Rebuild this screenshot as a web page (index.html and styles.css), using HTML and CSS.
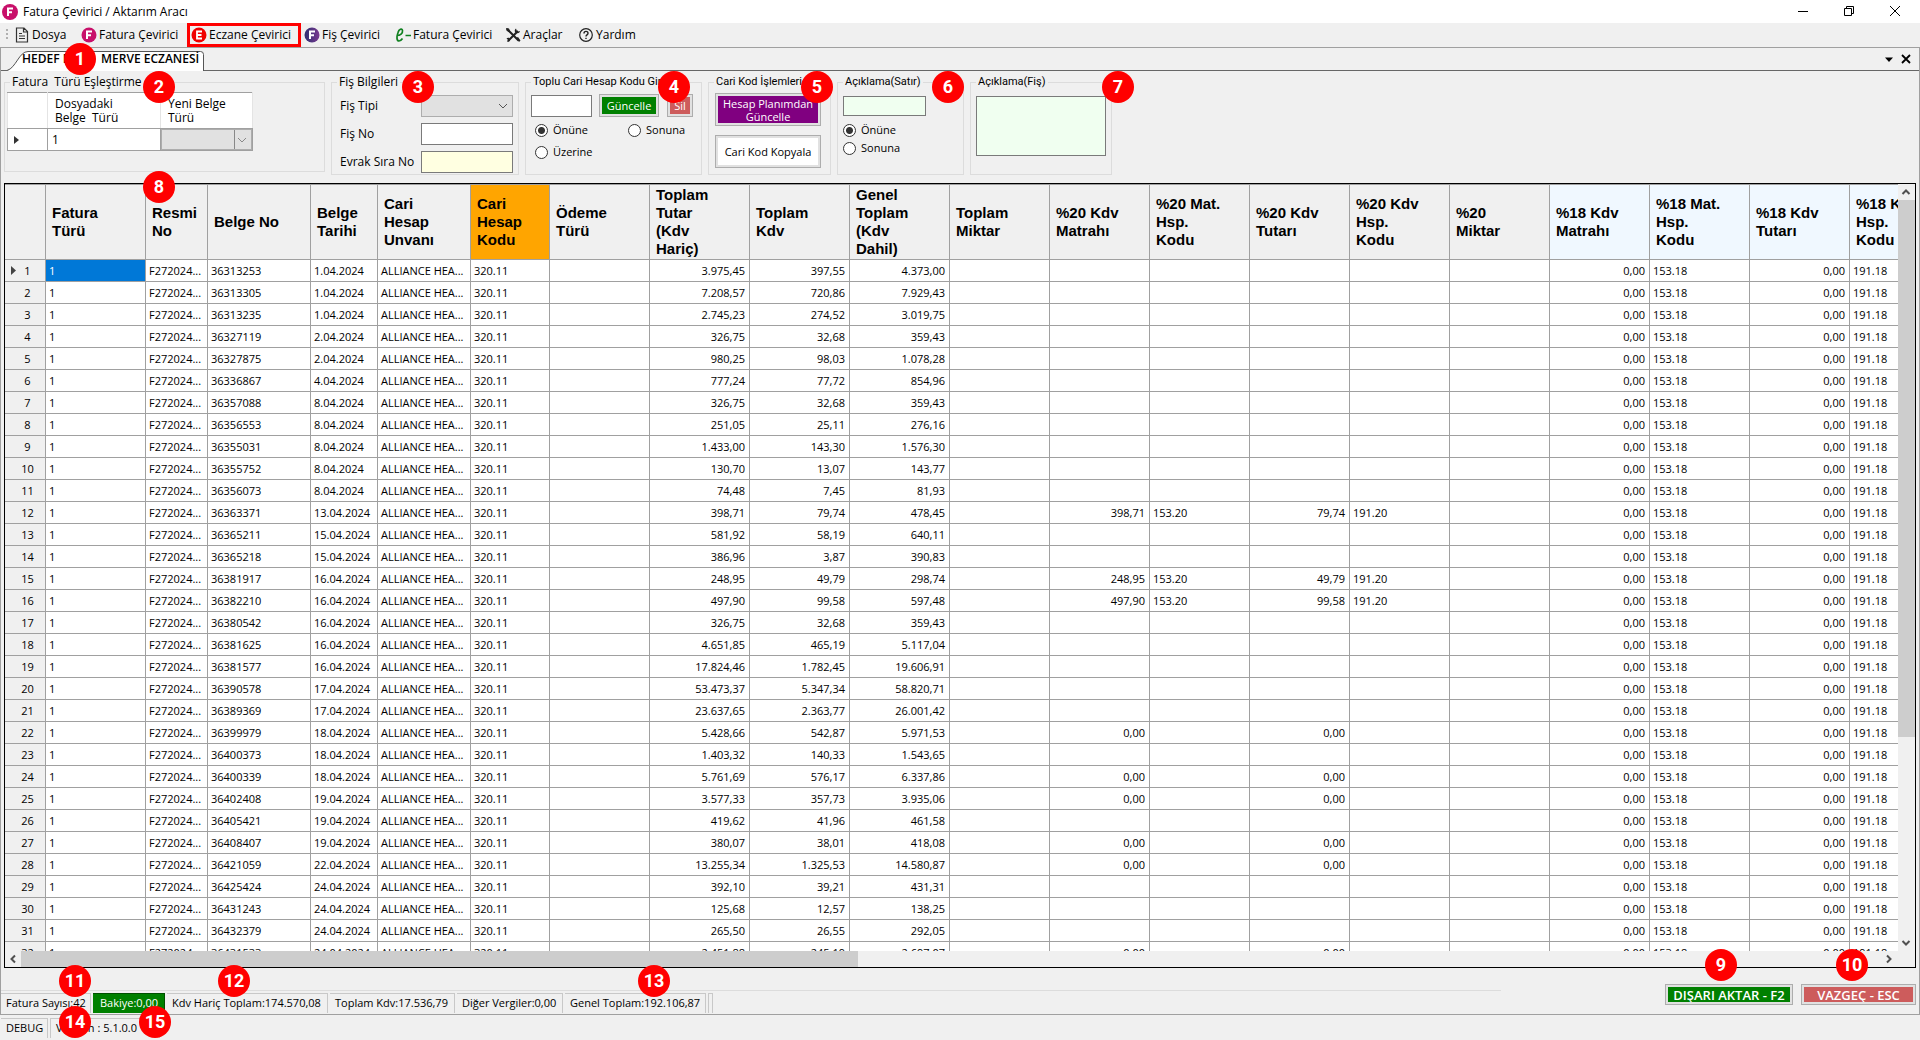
FILE: index.html
```
<!DOCTYPE html>
<html lang="tr">
<head>
<meta charset="utf-8">
<title>Fatura Çevirici / Aktarım Aracı</title>
<link rel="stylesheet" href="styles.css">
</head>
<body>
<header class="titlebar">
  <svg class="disc" viewBox="0 0 16 16"><circle cx="8" cy="8" r="8" fill="#c8106a"/><path d="M6 12V4.500h5M6 8.200h4" fill="none" stroke="#fff" stroke-width="2"/></svg>
  <h1>Fatura Çevirici / Aktarım Aracı</h1>
  <div class="winbtns">
    <button aria-label="Simge durumuna küçült"><svg viewBox="0 0 12 12"><path d="M1 6.500h10" stroke="#000" fill="none"/></svg></button>
    <button aria-label="Önceki boyut"><svg viewBox="0 0 12 12"><path d="M1.500 3.500h7v7h-7zM3.500 3.500v-2h7v7h-2" stroke="#000" fill="none"/></svg></button>
    <button aria-label="Kapat"><svg viewBox="0 0 12 12"><path d="M1 1l10 10M11 1L1 11" stroke="#000" fill="none"/></svg></button>
  </div>
</header>

<nav class="menu">
  <svg class="grip" viewBox="0 0 4 14"><path d="M1 1h2v2H1zM1 5h2v2H1zM1 9h2v2H1z" fill="#b0b0b0"/></svg>
  <button class="m-file"><svg viewBox="0 0 16 16"><path d="M2.500 1h7.500l3.500 3.500V15h-11zM9.500 1v4h4M5 6.500h3M5 9h6M5 11.500h6" fill="none" stroke="#333" stroke-width="1.200"/></svg>Dosya</button>
  <button class="m-inv"><svg viewBox="0 0 16 16"><circle cx="8" cy="8" r="7.500" fill="#c8106a"/><path d="M6 12V4.500h5M6 8.200h4" fill="none" stroke="#fff" stroke-width="2"/></svg>Fatura Çevirici</button>
  <button class="m-pharm marked"><svg viewBox="0 0 16 16"><circle cx="8" cy="8" r="7.500" fill="#f00000"/><path d="M11 4.500H6v7h5M6 8h4.500" fill="none" stroke="#fff" stroke-width="1.800"/></svg>Eczane Çevirici</button>
  <button class="m-slip"><svg viewBox="0 0 16 16"><defs><linearGradient id="slip"><stop offset="0" stop-color="#2e3070"/><stop offset="1" stop-color="#7a3a90"/></linearGradient></defs><circle cx="8" cy="8" r="7.500" fill="url(#slip)"/><path d="M6 12V4.500h5M6 8.200h4" fill="none" stroke="#fff" stroke-width="2"/></svg>Fiş Çevirici</button>
  <button class="m-einv"><svg viewBox="0 0 16 16"><path d="M2 8.500c3 0 6-2 5.500-5C7 1 4 2 3 5.500 1.500 10 1.500 14 4 14c1.500 0 2.500-1 3.500-2.500M10.500 8.500H16" fill="none" stroke="#108020" stroke-width="1.700"/></svg>Fatura Çevirici</button>
  <button class="m-tools"><svg viewBox="0 0 16 16"><path d="M2 2l11.500 11.500M13 4L3 14" fill="none" stroke="#222" stroke-width="2"/><path d="M11 1.500c-2 1.500-1.500 4 .5 4.500s3.500-.5 3.500-2l-2 .8-1.300-1.200zM1.500 11.500c1-1.500 3.500-1 3.500 1s-1.500 2.500-3 2l1.200-1.500zM1 1l3 .5L5 4 3.500 5 1.500 3.500zM11 11l2-1 2.500 3.500-1.500 1.500z" fill="#222"/></svg>Araçlar</button>
  <button class="m-help"><svg viewBox="0 0 16 16"><circle cx="8" cy="8" r="6.300" fill="none" stroke="#222" stroke-width="1.200"/><path d="M6 6.500C6 3.700 10 3.700 10 6.300 10 8 8 7.800 8 9.500M8 10.700v1.400" fill="none" stroke="#222" stroke-width="1.400"/></svg>Yardım</button>
</nav>

<main class="frame">
  <div class="tabs">
    <button class="tab"><svg viewBox="0 0 197 20"><path d="M0 19.500C9 19 12 0.500 21 0.500H193.500Q196.500 0.500 196.500 3.500V20H0z" fill="#fff"/><path d="M0 19.500C9 17 12 0.500 21 0.500H193.500Q196.500 0.500 196.500 3.500V20" fill="none" stroke="#555"/></svg><span class="tab-a">HEDEF DEPO</span><span>MERVE ECZANESİ</span></button>
    <div class="tabtools">
      <button aria-label="Sekmeler"><svg viewBox="0 0 10 10"><path d="M1 3.500h8L5 8z"/></svg></button>
      <button aria-label="Sekmeyi kapat"><svg viewBox="0 0 10 10"><path d="M1 1l8 8M9 1L1 9" stroke="#000" stroke-width="1.800"/></svg></button>
    </div>
  </div>

  <section class="groups">
    <fieldset class="g-match"><legend>Fatura &nbsp;Türü Eşleştirme</legend>
      <table class="match">
        <colgroup><col class="w-mark"><col class="w-doc"><col class="w-new"></colgroup>
        <thead><tr><th></th><th>Dosyadaki<br>Belge &nbsp;Türü</th><th>Yeni Belge<br>Türü</th></tr></thead>
        <tbody><tr><td><svg class="rowmark" viewBox="0 0 5 8"><path d="M0 0l5 4-5 4z" fill="#333"/></svg></td><td>1</td><td><select class="split" aria-label="Yeni Belge Türü"><option></option></select></td></tr></tbody>
      </table>
    </fieldset>
    <fieldset class="g-slip"><legend>Fiş Bilgileri</legend>
      <div class="form">
        <label for="tip">Fiş Tipi</label><select id="tip"><option></option></select>
        <label for="no">Fiş No</label><input id="no" type="text">
        <label for="evrak">Evrak Sıra No</label><input id="evrak" class="yellow" type="text">
      </div>
    </fieldset>
    <fieldset class="g-code"><legend>Toplu Cari Hesap Kodu Giriş</legend>
      <div class="coderow">
        <input type="text" aria-label="Cari hesap kodu">
        <button class="btn green">Güncelle</button>
        <button class="btn coral">Sil</button>
      </div>
      <div class="radios">
        <label><input type="radio" name="kod" checked>Önüne</label>
        <label><input type="radio" name="kod">Sonuna</label>
        <label><input type="radio" name="kod">Üzerine</label>
      </div>
    </fieldset>
    <fieldset class="g-ops"><legend>Cari Kod İşlemleri</legend>
      <div class="stack">
        <button class="btn purple">Hesap Planımdan<br>Güncelle</button>
        <button class="btn white">Cari Kod Kopyala</button>
      </div>
    </fieldset>
    <fieldset class="g-line"><legend>Açıklama(Satır)</legend>
      <input class="mint" type="text" aria-label="Açıklama satır">
      <div class="radios one">
        <label><input type="radio" name="satir" checked>Önüne</label>
        <label><input type="radio" name="satir">Sonuna</label>
      </div>
    </fieldset>
    <fieldset class="g-note"><legend>Açıklama(Fiş)</legend>
      <textarea class="mint" aria-label="Açıklama fiş"></textarea>
    </fieldset>
  </section>

  <section class="grid">
    <div class="gridview">
      <table class="data">
        <colgroup><col class="c-num"><col><col class="c-res"><col class="c-bel"><col class="c-date"><col class="c-name"><col class="c-code"><col><col><col><col><col><col><col><col><col><col><col><col><col><col></colgroup>
        <thead><tr>
          <th></th><th>Fatura<br>Türü</th><th>Resmi<br>No</th><th>Belge No</th><th>Belge<br>Tarihi</th><th>Cari<br>Hesap<br>Unvanı</th><th class="orange">Cari<br>Hesap<br>Kodu</th><th>Ödeme<br>Türü</th><th>Toplam<br>Tutar<br>(Kdv<br>Hariç)</th><th>Toplam<br>Kdv</th><th>Genel<br>Toplam<br>(Kdv<br>Dahil)</th><th>Toplam<br>Miktar</th><th>%20 Kdv<br>Matrahı</th><th>%20 Mat.<br>Hsp.<br>Kodu</th><th>%20 Kdv<br>Tutarı</th><th>%20 Kdv<br>Hsp.<br>Kodu</th><th>%20<br>Miktar</th><th class="blue">%18 Kdv<br>Matrahı</th><th class="blue">%18 Mat.<br>Hsp.<br>Kodu</th><th class="blue">%18 Kdv<br>Tutarı</th><th class="blue">%18 Kdv<br>Hsp.<br>Kodu</th>
        </tr></thead>
        <tbody id="rows"></tbody>
      </table>
    </div>
    <div class="vbar">
      <svg viewBox="0 0 16 16"><path d="M4.500 10L8 6.500 11.500 10" fill="none" stroke="#505050" stroke-width="2"/></svg>
      <div class="track"><div class="thumb"></div></div>
      <svg viewBox="0 0 16 16"><path d="M4.500 6L8 9.500 11.500 6" fill="none" stroke="#505050" stroke-width="2"/></svg>
    </div>
    <div class="hbar">
      <svg viewBox="0 0 16 16"><path d="M10 4.500L6.500 8 10 11.500" fill="none" stroke="#505050" stroke-width="2"/></svg>
      <div class="track"><div class="thumb"></div></div>
      <svg viewBox="0 0 16 16"><path d="M6 4.500L9.500 8 6 11.500" fill="none" stroke="#505050" stroke-width="2"/></svg>
    </div>
  </section>

  <footer class="foot">
    <div class="totals">
      <span class="s1">Fatura Sayısı:42</span><span class="s2 bal">Bakiye:0,00</span><span class="s3">Kdv Hariç Toplam:174.570,08</span><span class="s4">Toplam Kdv:17.536,79</span><span class="s5">Diğer Vergiler:0,00</span><span class="s6">Genel Toplam:192.106,87</span><span class="s7"></span>
    </div>
    <div class="actions">
      <button class="btn green big export">DIŞARI AKTAR - F2</button>
      <button class="btn coral big cancel">VAZGEÇ - ESC</button>
    </div>
  </footer>
</main>

<div class="status"><span class="t1">DEBUG</span><span class="t2">Version : 5.1.0.0</span></div>

<div class="badge b1">1</div><div class="badge b2">2</div><div class="badge b3">3</div><div class="badge b4">4</div><div class="badge b5">5</div><div class="badge b6">6</div><div class="badge b7">7</div><div class="badge b8">8</div><div class="badge b9">9</div><div class="badge b10">10</div><div class="badge b11">11</div><div class="badge b12">12</div><div class="badge b13">13</div><div class="badge b14">14</div><div class="badge b15">15</div>
<script src="rows.js"></script>
</body>
</html>
```
FILE: styles.css
```
* { box-sizing: border-box; }
body { margin: 0; position: relative; height: 100vh; min-height: 600px; overflow: hidden; display: flex; flex-direction: column; background: #f0f0f0; color: #000; font: 11px/14px "Open Sans", "Noto Sans", sans-serif; }
button { font: inherit; color: inherit; border: 0; background: none; padding: 0; }
button, span, label, legend { white-space: nowrap; }
input, select, textarea { font: inherit; margin: 0; border: 1px solid #7a7a7a; border-radius: 0; background: #fff; padding: 0 3px; }

.titlebar { height: 23px; flex: none; background: #fff; display: flex; align-items: center; padding-left: 2px; }
.titlebar .disc { width: 16px; height: 16px; }
.titlebar h1 { margin: 0 auto 0 5px; font-size: 12px; font-weight: 400; }
.winbtns { display: flex; padding-right: 2px; }
.winbtns button { width: 46px; height: 23px; display: grid; place-items: center; }
.winbtns svg { width: 12px; height: 12px; margin-bottom: 2px; }

.menu { height: 24px; flex: none; display: flex; align-items: center; padding-left: 5px; font-size: 12px; }
.menu .grip { width: 4px; height: 14px; margin-right: 5px; }
.menu button { display: flex; align-items: center; gap: 2px; height: 24px; text-align: left; }
.menu button svg { width: 16px; height: 16px; flex: none; }
.m-file { width: 67px; }
.m-inv { width: 106px; }
.m-pharm { width: 114px; }
.m-slip { width: 91px; margin-left: 3px; }
.m-einv { width: 110px; }
.m-tools { width: 73px; }
.menu .marked { border: 3px solid #f00; padding-left: 1px; }

.frame { flex: 1; min-height: 0; display: flex; flex-direction: column; border: 1px solid #a0a0a0; }
.tabs { height: 23px; flex: none; display: flex; justify-content: space-between; align-items: flex-end; border-bottom: 1px solid #666; padding: 0 8px 0 6px; }
.tab { position: relative; width: 197px; height: 20px; margin-bottom: -1px; padding-left: 15px; display: flex; font-size: 12px; font-weight: 600; line-height: 16px; }
.tab svg { position: absolute; inset: 0; width: 197px; height: 20px; }
.tab span { position: relative; }
.tab-a { width: 79px; text-align: left; }
.tabtools { display: flex; gap: 7px; align-self: center; }
.tabtools svg { width: 10px; height: 10px; display: block; }

.groups { flex: none; display: flex; gap: 6px; padding: 3px 0 8px 3px; align-items: flex-start; }
fieldset { margin: 0; padding: 0; border: 1px solid #dcdcdc; height: 101px; min-width: 0; flex: none; }
legend { margin-left: 5px; padding: 0 2px; line-height: 16px; font-size: 11px; font-family: Roboto, sans-serif; }
.g-match { width: 321px; height: 98px; }
.g-slip { width: 188px; }
.g-match legend, .g-slip legend { font-family: inherit; font-size: 12px; }
.g-code { width: 177px; }
.g-ops { width: 123px; }
.g-line { width: 127px; }
.g-note { width: 142px; }

.match { table-layout: fixed; width: 245px; margin: 2px 0 0 2px; border-collapse: collapse; font-size: 12px; background: #fff; }
.w-mark { width: 40px; } .w-doc { width: 113px; } .w-new { width: 92px; }
.match th { height: 36px; padding: 0 7px; text-align: left; font-weight: 400; line-height: 14px; border: 1px solid #a0a0a0; border-right-color: #e4e4e4; border-left-color: #e4e4e4; }
.match td { height: 22px; padding: 0 0 0 4px; border: 1px solid #a0a0a0; }
.match td:last-child { padding: 0; }
.rowmark { width: 5px; height: 8px; display: block; margin-left: 2px; }
select { appearance: none; background: #e1e1e1 url("data:image/svg+xml,%3Csvg xmlns='http://www.w3.org/2000/svg' width='10' height='6'%3E%3Cpath d='M1 1l4 4 4-4' fill='none' stroke='%23555'/%3E%3C/svg%3E") no-repeat right 4px center; border-color: #adadad; }
.split { display: block; width: 100%; height: 21px; border-width: 1px; background-image: url("data:image/svg+xml,%3Csvg xmlns='http://www.w3.org/2000/svg' width='17' height='20'%3E%3Cpath d='M.5 0v20M4 8l4 4 4-4' fill='none' stroke='%23888'/%3E%3C/svg%3E"); background-position: right center; }
.form { display: grid; grid-template-columns: 81px 92px; grid-auto-rows: 22px; gap: 6px 0; padding: 5px 0 0 8px; align-items: center; font-size: 12px; }
.form input, .form select { width: 92px; height: 22px; }
input.yellow { background: #ffffe1; }
.mint { background: #f0fff0; }

.coderow { display: flex; align-items: center; padding: 4px 0 0 5px; }
.coderow input { width: 61px; height: 22px; margin-right: 7px; }
.coderow .green { width: 60px; height: 23px; margin-right: 8px; }
.coderow .coral { width: 26px; height: 23px; }
.btn { border: 1px solid #adadad; outline: 2px solid #e1e1e1; outline-offset: -3px; text-align: center; }
.green { background: #008000; color: #fff; }
.coral { background: #cd5c5c; color: #fff; }
.purple { background: #800080; color: #fff; line-height: 13px; }
.white { background: #fff; }
.radios { display: grid; grid-template-columns: 93px 70px; row-gap: 8px; padding: 6px 0 0 9px; }
.radios label { display: flex; align-items: center; gap: 5px; height: 14px; }
input[type=radio] { appearance: none; width: 13px; height: 13px; border: 1px solid #333; border-radius: 50%; padding: 0; }
input[type=radio]:checked { background: radial-gradient(circle, #333 0 3px, #fff 4px); }
.radios.one { display: flex; flex-direction: column; gap: 4px; padding: 7px 0 0 5px; }
.stack { display: flex; flex-direction: column; gap: 9px; padding: 3px 0 0 6px; }
.stack .btn { width: 106px; height: 33px; }
.g-line .mint { display: block; width: 83px; height: 20px; margin: 6px 0 0 5px; }
.g-note .mint { display: block; width: 130px; height: 60px; margin: 6px 0 0 5px; resize: none; }

.grid { flex: 1; min-height: 0; display: grid; grid-template: minmax(0, 1fr) 16px / minmax(0, 1fr) 17px; margin: 0 3px; border: 1px solid #000; }
.gridview { overflow: hidden; background: #fff; }
.data { table-layout: fixed; width: 1944px; border-collapse: separate; border-spacing: 0; }
.data col { width: 100px; }
.data .c-num { width: 41px; } .data .c-res { width: 62px; } .data .c-bel { width: 103px; } .data .c-date { width: 67px; } .data .c-name { width: 93px; } .data .c-code { width: 79px; }
.data th { height: 76px; padding: 0 0 0 6px; background: #f0f0f0; text-align: left; font: 700 15px/18px "Liberation Sans", sans-serif; border: solid #a0a0a0; border-width: 1px 1px 1px 0; white-space: nowrap; }
.data th.orange { background: #ffa500; }
.data th.blue { background: #f0f8ff; }
.data td { height: 22px; padding: 0 3px; border: solid #a0a0a0; border-width: 0 1px 1px 0; white-space: nowrap; overflow: hidden; line-height: 16px; }
.data td.r { text-align: right; padding-right: 4px; }
.data td.n { position: relative; background: #f0f0f0; text-align: center; padding: 0 0 0 5px; }
.data td.sel { background: #0078d7; color: #fff; }
.data .n svg { position: absolute; left: 6px; top: 6px; width: 5px; height: 9px; }
.vbar { display: flex; flex-direction: column; align-items: stretch; }
.hbar { grid-column: 1 / -1; display: flex; padding-right: 18px; }
.vbar svg, .hbar svg { width: 16px; height: 16px; flex: none; }
.track { flex: 1; }
.thumb { background: #cdcdcd; }
.vbar .thumb { height: 73%; }
.hbar .thumb { width: 45%; height: 100%; }

.foot { flex: none; height: 46px; display: flex; justify-content: space-between; align-items: flex-end; padding-right: 3px; }
.totals { display: flex; flex: 0 1 1500px; height: 24px; border-top: 1px solid #dcdcdc; padding: 2px 0 1px; }
.totals span, .status span { padding-left: 5px; line-height: 18px; height: 20px; border: 1px solid #c8c8c8; border-width: 1px 1px 0 0; margin-right: 2px; }
.totals .s1 { width: 90px; } .totals .s2 { width: 72px; } .totals .s3 { width: 161px; } .totals .s4 { width: 125px; } .totals .s5 { width: 106px; } .totals .s6 { width: 141px; } .totals .s7 { width: 5px; padding: 0; border-left-width: 1px; }
.totals .bal { background: #008000; color: #fff; border-color: #005000; padding-left: 7px; }
.actions { display: flex; gap: 8px; margin-bottom: 9px; }
.big { height: 21px; font-size: 13px; font-weight: 600; line-height: 14px; }
.export { width: 128px; }
.cancel { width: 115px; }

.status { flex: none; height: 25px; display: flex; padding: 3px 0 0 1px; }
.status .t1 { width: 47px; }
.status .t2 { width: 110px; border-left-width: 1px; }

.badge { position: absolute; width: 32px; height: 32px; border-radius: 50%; background: #f00; color: #fff; font: 700 18px/32px Roboto, sans-serif; text-align: center; }
.b1 { left: 64px; top: 43px; }
.b2 { left: 143px; top: 71px; }
.b3 { left: 402px; top: 71px; }
.b4 { left: 658px; top: 71px; }
.b5 { left: 801px; top: 71px; }
.b6 { left: 932px; top: 71px; }
.b7 { left: 1102px; top: 71px; }
.b8 { left: 143px; top: 171px; }
.b9 { right: 183px; bottom: 59px; }
.b10 { right: 52px; bottom: 59px; }
.b11 { left: 59px; bottom: 43px; }
.b12 { left: 218px; bottom: 43px; }
.b13 { left: 638px; bottom: 43px; }
.b14 { left: 59px; bottom: 2px; }
.b15 { left: 139px; bottom: 2px; }
```
FILE: rows.js
```
// belge no | tarih | toplam tutar | toplam kdv | genel toplam | %20 matrah | %20 tutar
const invoices = `36313253|1.04.2024|3.975,45|397,55|4.373,00
36313305|1.04.2024|7.208,57|720,86|7.929,43
36313235|1.04.2024|2.745,23|274,52|3.019,75
36327119|2.04.2024|326,75|32,68|359,43
36327875|2.04.2024|980,25|98,03|1.078,28
36336867|4.04.2024|777,24|77,72|854,96
36357088|8.04.2024|326,75|32,68|359,43
36356553|8.04.2024|251,05|25,11|276,16
36355031|8.04.2024|1.433,00|143,30|1.576,30
36355752|8.04.2024|130,70|13,07|143,77
36356073|8.04.2024|74,48|7,45|81,93
36363371|13.04.2024|398,71|79,74|478,45|398,71|79,74
36365211|15.04.2024|581,92|58,19|640,11
36365218|15.04.2024|386,96|3,87|390,83
36381917|16.04.2024|248,95|49,79|298,74|248,95|49,79
36382210|16.04.2024|497,90|99,58|597,48|497,90|99,58
36380542|16.04.2024|326,75|32,68|359,43
36381625|16.04.2024|4.651,85|465,19|5.117,04
36381577|16.04.2024|17.824,46|1.782,45|19.606,91
36390578|17.04.2024|53.473,37|5.347,34|58.820,71
36389369|17.04.2024|23.637,65|2.363,77|26.001,42
36399979|18.04.2024|5.428,66|542,87|5.971,53|0,00|0,00
36400373|18.04.2024|1.403,32|140,33|1.543,65
36400339|18.04.2024|5.761,69|576,17|6.337,86|0,00|0,00
36402408|19.04.2024|3.577,33|357,73|3.935,06|0,00|0,00
36405421|19.04.2024|419,62|41,96|461,58
36408407|19.04.2024|380,07|38,01|418,08|0,00|0,00
36421059|22.04.2024|13.255,34|1.325,53|14.580,87|0,00|0,00
36425424|24.04.2024|392,10|39,21|431,31
36431243|24.04.2024|125,68|12,57|138,25
36432379|24.04.2024|265,50|26,55|292,05
36431533|24.04.2024|2.451,88|245,19|2.697,07|0,00|0,00`.split("\n").map(line => line.split("|"));

const cell = (text = "", cls = "") => `<td${cls && ` class="${cls}"`}>${text}</td>`;
const mark = '<svg viewBox="0 0 5 9"><path d="M0 0l5 4.500-5 4.500z" fill="#444"/></svg>';

document.getElementById("rows").innerHTML = invoices.map(([no, date, net, vat, total, base20, vat20], i) => {
  const has20 = base20 && base20 !== "0,00";
  return "<tr>" + cell((i ? "" : mark) + (i + 1), "n") + cell("1", i ? "" : "sel") + cell("F272024...") + cell(no) + cell(date) +
    cell("ALLIANCE HEA...") + cell("320.11") + cell() + cell(net, "r") + cell(vat, "r") + cell(total, "r") + cell() +
    cell(base20, "r") + cell(has20 ? "153.20" : "") + cell(vat20, "r") + cell(has20 ? "191.20" : "") + cell() +
    cell("0,00", "r") + cell("153.18") + cell("0,00", "r") + cell("191.18") + "</tr>";
}).join("");
```
